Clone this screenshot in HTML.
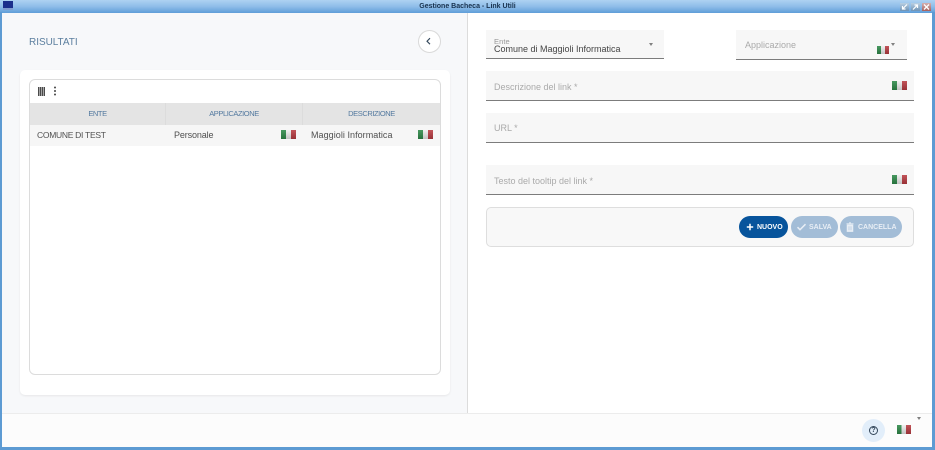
<!DOCTYPE html>
<html lang="it">
<head>
<meta charset="utf-8">
<title>Gestione Bacheca - Link Utili</title>
<style>
html,body{margin:0;padding:0;width:935px;height:450px;overflow:hidden;background:#fff;font-family:"Liberation Sans",sans-serif;}
div,span,svg{position:absolute;box-sizing:border-box;white-space:nowrap;}
.flag{width:15px;height:9px;filter:blur(.35px);background:linear-gradient(90deg,#2f8a4a 0,#2f8a4a 33%,#eeeeee 33%,#eeeeee 66%,#b93c42 66%,#b93c42 100%);}
.flag:after{content:"";position:absolute;inset:0;background:linear-gradient(180deg,rgba(255,255,255,.12),rgba(0,0,0,.18));}
.field{background:#f7f7f7;border-bottom:1px solid #7c7c7c;}
.ph{font-size:9px;color:#aaa;letter-spacing:0;line-height:11px;}
.th{top:103px;height:22px;line-height:22px;text-align:center;font-size:7.5px;color:#53799f;letter-spacing:-.42px;}
.td{top:125px;height:21px;line-height:20px;font-size:9px;color:#505050;}
.btn{top:216px;height:22px;border-radius:11px;color:#fff;font-size:7px;font-weight:bold;line-height:22px;}
.btn span{top:1px;}
.caret{width:0;height:0;border-left:2.5px solid transparent;border-right:2.5px solid transparent;border-top:3.5px solid #808080;}
</style>
</head>
<body>
<!-- window frame -->
<div style="left:0;top:0;width:935px;height:13px;background:linear-gradient(180deg,#aed2f2 0,#8fbde9 50%,#5f9ed8 100%);"></div>
<div style="left:0;top:12px;width:2px;height:438px;background:#5d9bd3;"></div>
<div style="left:932px;top:12px;width:3px;height:438px;background:#5d9bd3;"></div>
<div style="left:0;top:447px;width:935px;height:3px;background:#5d9bd3;"></div>
<div style="left:3px;top:1px;width:10px;height:8px;background:#1b2f8c;"></div>
<div style="left:3px;top:8px;width:10px;height:2px;background:#7f9ccf;"></div>
<div style="left:0;top:1px;width:935px;height:11px;line-height:11px;text-align:center;font-size:7px;font-weight:bold;color:#17314d;">Gestione Bacheca - Link Utili</div>
<!-- window buttons -->
<div style="left:900px;top:3px;width:9px;height:8px;background:linear-gradient(#b9cfe3,#6f93b5);"></div>
<svg style="left:900px;top:3px" width="9" height="8" viewBox="0 0 9 8"><path d="M7 1.5 3 5.5M2.5 3v3h3" stroke="#fff" stroke-width="1.2" fill="none"/></svg>
<div style="left:911px;top:3px;width:9px;height:8px;background:linear-gradient(#b9cfe3,#6f93b5);"></div>
<svg style="left:911px;top:3px" width="9" height="8" viewBox="0 0 9 8"><path d="M2 6.5 6 2.5M3.5 2h3v3" stroke="#fff" stroke-width="1.2" fill="none"/></svg>
<div style="left:922px;top:3px;width:9px;height:8px;background:linear-gradient(#d3b0b0,#a8605c);"></div>
<svg style="left:922px;top:3px" width="9" height="8" viewBox="0 0 9 8"><path d="M2 1.5 7 6.5M7 1.5 2 6.5" stroke="#fff" stroke-width="1.3" fill="none"/></svg>

<!-- left pane -->
<div style="left:2px;top:13px;width:465px;height:400px;background:#f7f8fa;"></div>
<div style="left:467px;top:13px;width:1px;height:400px;background:#dcdcdc;"></div>
<div style="left:29px;top:36px;font-size:10px;line-height:13px;color:#5c7f9f;letter-spacing:-.03px;">RISULTATI</div>
<div style="left:418px;top:30px;width:23px;height:23px;border-radius:50%;background:#fff;border:1px solid #d9d9d9;"></div>
<svg style="left:425px;top:37px" width="7" height="9" viewBox="0 0 7 9"><path d="M5 1.2 2 4.2 5 7.2" stroke="#33475b" stroke-width="1.1" fill="none"/></svg>

<!-- card -->
<div style="left:20px;top:70px;width:430px;height:325px;background:#fff;border-radius:5px;box-shadow:0 1px 2px rgba(0,0,0,.07);"></div>
<div style="left:29px;top:79px;width:412px;height:296px;background:#fff;border:1px solid #dcdcdc;border-radius:6px;"></div>
<div style="left:38px;top:87px;width:7px;height:9px;background:repeating-linear-gradient(90deg,#4a4a4a 0,#4a4a4a 1.5px,#fff 1.5px,#fff 2px);"></div>
<svg style="left:53px;top:86px" width="4" height="10" viewBox="0 0 4 10"><circle cx="2" cy="1.5" r="1" fill="#444"/><circle cx="2" cy="5" r="1" fill="#444"/><circle cx="2" cy="8.5" r="1" fill="#444"/></svg>
<div style="left:30px;top:103px;width:410px;height:22px;background:#e4e4e4;"></div>
<div style="left:165px;top:103px;width:1px;height:22px;background:#dcdcdc;"></div>
<div style="left:302px;top:103px;width:1px;height:22px;background:#dcdcdc;"></div>
<div class="th" style="left:30px;width:135px;">ENTE</div>
<div class="th" style="left:166px;width:136px;">APPLICAZIONE</div>
<div class="th" style="left:303px;width:137px;">DESCRIZIONE</div>
<div style="left:30px;top:125px;width:410px;height:21px;background:#f6f6f6;"></div>
<div class="td" style="left:37px;font-size:8.5px;letter-spacing:-.28px;">COMUNE DI TEST</div>
<div class="td" style="left:174px;letter-spacing:-.12px;">Personale</div>
<div class="td" style="left:311px;letter-spacing:.05px;">Maggioli Informatica</div>
<div class="flag" style="left:281px;top:130px;"></div>
<div class="flag" style="left:418px;top:130px;"></div>

<!-- form -->
<div class="field" style="left:486px;top:30px;width:178px;height:29px;"></div>
<div style="left:494px;top:37px;font-size:7.5px;line-height:9px;color:#999;letter-spacing:.1px;">Ente</div>
<div style="left:494px;top:44px;font-size:9px;line-height:11px;color:#444;">Comune di Maggioli Informatica</div>
<div class="caret" style="left:649px;top:43px;"></div>

<div class="field" style="left:736px;top:30px;width:171px;height:30px;"></div>
<div class="ph" style="left:745px;top:40px;">Applicazione</div>
<div class="flag" style="left:877px;top:46px;width:12px;height:8px;"></div>
<div class="caret" style="left:891px;top:43px;"></div>

<div class="field" style="left:486px;top:71px;width:428px;height:30px;"></div>
<div class="ph" style="left:494px;top:82px;">Descrizione del link *</div>
<div class="flag" style="left:892px;top:81px;"></div>

<div class="field" style="left:486px;top:113px;width:428px;height:30px;"></div>
<div class="ph" style="left:494px;top:123px;">URL *</div>

<div class="field" style="left:486px;top:165px;width:428px;height:30px;"></div>
<div class="ph" style="left:494px;top:176px;">Testo del tooltip del link *</div>
<div class="flag" style="left:892px;top:175px;"></div>

<!-- action panel -->
<div style="left:486px;top:207px;width:428px;height:40px;background:#f8f8f8;border:1px solid #dedede;border-radius:5px;"></div>
<div class="btn" style="left:739px;width:49px;background:#07549c;"><span style="left:18px;">NUOVO</span></div>
<svg style="left:746px;top:223px" width="8" height="8" viewBox="0 0 8 8"><path d="M4 .8v6.4M.8 4h6.4" stroke="#fff" stroke-width="1.5"/></svg>
<div class="btn" style="left:791px;width:47px;background:#a3bdd7;color:#e8eef5;"><span style="left:18px;">SALVA</span></div>
<svg style="left:796px;top:222px" width="11" height="10" viewBox="0 0 11 10"><path d="M1.5 5.2 4 7.7 9.5 2.2" stroke="#e8eef5" stroke-width="1.5" fill="none"/></svg>
<div class="btn" style="left:840px;width:62px;background:#a3bdd7;color:#e8eef5;"><span style="left:18px;">CANCELLA</span></div>
<svg style="left:846px;top:222px" width="8" height="10" viewBox="0 0 8 10"><path d="M1.2 3h5.6v6.4H1.2zM.5 1.8h7M3 .8h2" stroke="#e8eef5" stroke-width=".9" fill="#e8eef5"/><path d="M3 4.2v4M5 4.2v4" stroke="#a3bdd7" stroke-width=".6"/></svg>

<!-- footer -->
<div style="left:2px;top:413px;width:930px;height:34px;background:#fcfcfc;border-top:1px solid #ececec;"></div>
<div style="left:862px;top:419px;width:23px;height:23px;border-radius:50%;background:#e2eefa;"></div>
<div style="left:869px;top:426px;width:9px;height:9px;border:1px solid #33475b;border-radius:50%;font-size:7px;line-height:7px;text-align:center;color:#33475b;font-weight:bold;">?</div>
<div class="flag" style="left:897px;top:425px;width:14px;"></div>
<div class="caret" style="left:917px;top:417px;"></div>
</body>
</html>
